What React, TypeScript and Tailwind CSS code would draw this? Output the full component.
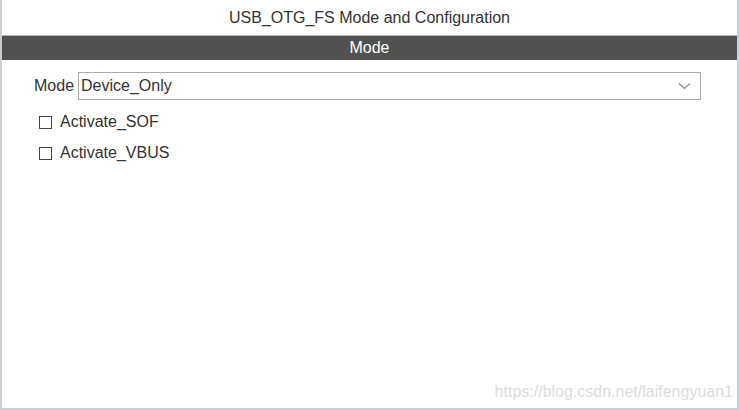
import { useState } from 'react'

// USB_OTG_FS configuration panel (CubeMX style).
export default function App() {
  const [sof, setSof] = useState(false)
  const [vbus, setVbus] = useState(false)

  return (
    <div
      className="flex h-[410px] w-[739px] flex-col border-x-2 border-b-2 border-[#c6ced6] bg-white text-[16px] text-[#333]"
      style={{ fontFamily: '"Liberation Sans", Arial, sans-serif' }}
    >
      <div className="flex h-[35px] items-center justify-center">USB_OTG_FS Mode and Configuration</div>
      <div className="flex h-[25px] items-center justify-center border-t border-[#b4b4b4] bg-[#505150] text-white">
        Mode
      </div>

      <div className="flex flex-1 flex-col pl-[32px] pt-[12px]">
        <div className="flex items-center gap-[4px]">
          <span>Mode</span>
          <div className="flex h-[28px] w-[623px] items-center justify-between border border-[#ababab] pl-[2px] pr-[9px]">
            <span>Device_Only</span>
            <svg width="13" height="8" viewBox="0 0 13 8" fill="none" stroke="#888" strokeWidth="1.2">
              <path d="M1 1.5l5.5 5 5.5-5" />
            </svg>
          </div>
        </div>

        <Check label="Activate_SOF" on={sof} toggle={() => setSof(!sof)} className="mt-[10px]" />
        <Check label="Activate_VBUS" on={vbus} toggle={() => setVbus(!vbus)} className="mt-[7px]" />

        <div className="mt-auto flex justify-end pb-[4px] pr-[4px] text-[#dcdcdc]">https://blog.csdn.net/laifengyuan1</div>
      </div>
    </div>
  )
}

function Check({ label, on, toggle, className }: { label: string; on: boolean; toggle: () => void; className: string }) {
  return (
    <div className={`flex items-center gap-[8px] pl-[5px] ${className}`} onClick={toggle}>
      <span className="flex h-[13px] w-[13px] items-center justify-center border border-[#444]">
        {on ? <span className="h-[7px] w-[7px] bg-[#333]" /> : null}
      </span>
      <span>{label}</span>
    </div>
  )
}
